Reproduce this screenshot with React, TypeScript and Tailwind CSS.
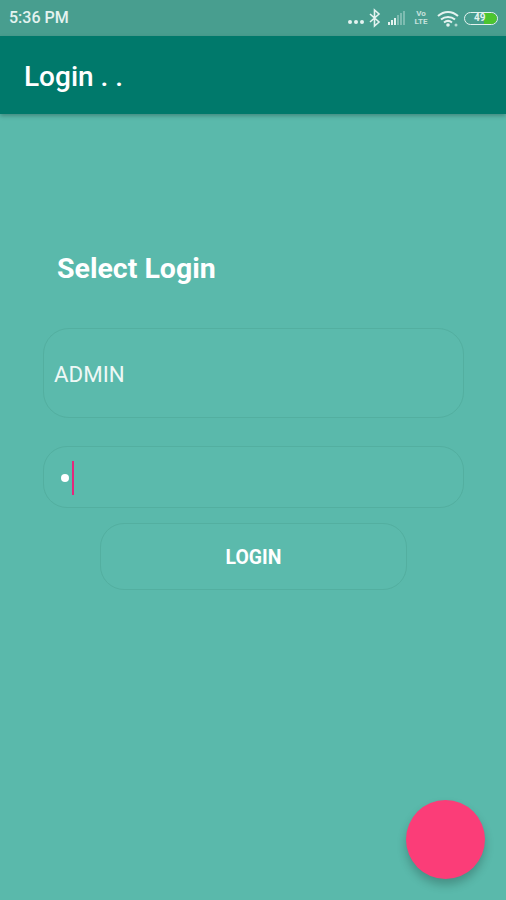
export default function App() {
  return (
    <div className="relative h-[900px] w-[506px] overflow-hidden bg-[#5ab9ab] font-['Roboto',sans-serif] text-white">
      {/* Status bar */}
      <div className="flex h-9 items-center justify-between bg-[#489e8f] pl-[9px] pr-[8px]">
        <span className="text-[16px] font-medium leading-none text-[#e4f3f0]">5:36 PM</span>
        <div className="flex items-center text-[#e4f3f0]">
          {/* dots, bluetooth, signal */}
          <svg width="62" height="20" viewBox="0 0 62 20">
            <circle cx="3" cy="14" r="2" fill="currentColor" />
            <circle cx="9" cy="14" r="2" fill="currentColor" />
            <circle cx="15" cy="14" r="2" fill="currentColor" />
            <path d="M23 6l9 8-4.500 4V2l4.500 4-9 8" fill="none" stroke="currentColor" strokeWidth="1.600" />
            <rect x="41" y="14" width="2" height="3" fill="currentColor" />
            <rect x="44" y="12" width="2" height="5" fill="currentColor" />
            <rect x="47" y="10" width="2" height="7" fill="currentColor" />
            <rect x="50" y="7" width="2" height="10" fill="currentColor" opacity="0.35" />
            <rect x="53" y="5" width="2" height="12" fill="currentColor" opacity="0.35" />
            <rect x="56" y="3" width="2" height="14" fill="currentColor" opacity="0.35" />
          </svg>
          {/* volte */}
          <div className="ml-[3px] flex w-[18px] flex-col items-center text-[8px] font-bold leading-[8px] opacity-80">
            <span>Vo</span>
            <span>LTE</span>
          </div>
          {/* wifi */}
          <svg width="22" height="20" viewBox="0 0 22 20" className="ml-[7px]">
            <path d="M1 8c6-5.500 14-5.500 20 0M4 11.500c4-3.500 10-3.500 14 0M7 14.500c2.500-2 5.500-2 8 0" fill="none" stroke="currentColor" strokeWidth="2" />
            <circle cx="11" cy="17" r="1.800" fill="currentColor" />
            <circle cx="19" cy="17" r="1.500" fill="currentColor" opacity="0.7" />
          </svg>
          {/* battery */}
          <div className="relative ml-[5px] flex h-[13px] w-[34px] items-center overflow-hidden rounded-full border-[1.5px] border-[#e4f3f0] pl-[9px]">
            <span className="absolute bottom-0 right-0 top-0 w-[13px] rounded-r-full bg-[#4cc52f]" />
            <span className="relative text-[10px] font-bold leading-none text-[#e4f3f0]">49</span>
          </div>
        </div>
      </div>

      {/* App bar */}
      <div className="flex h-[78px] items-center bg-[#00796b] pl-6 pt-[3px] shadow-[0_2px_4px_rgba(0,0,0,0.25)]">
        <span className="text-[28px] font-medium leading-none">Login . .</span>
      </div>

      {/* Form */}
      <div className="flex flex-col pl-[43px] pt-[139px]">
        <h1 className="ml-[14px] text-[28.5px] font-bold leading-8">Select Login</h1>

        <div className="mt-[43px] flex h-[90px] w-[421px] items-center rounded-[26px] border border-[#53afa0] bg-[#5bbaac] pl-[10px] pt-[3px]">
          <span className="text-[22.3px] leading-none text-[#eef8f6]">ADMIN</span>
        </div>

        <div className="mt-7 flex h-[62px] w-[421px] items-center rounded-[24px] border border-[#53afa0] bg-[#5bbaac] pl-[18px] pt-[1px]">
          <span className="h-2 w-2 -translate-x-px rounded-full bg-white" />
          <span className="ml-[2px] h-[34px] w-[2px] bg-[#e5277b]" />
        </div>

        <button className="ml-[57px] mt-[15px] flex h-[67px] w-[307px] items-center justify-center rounded-[24px] border border-[#53afa0] bg-[#5bbaac] pt-[2px] text-[19.400px] font-bold">
          LOGIN
        </button>
      </div>

      {/* FAB */}
      <div className="absolute left-[406px] top-[800px] h-[79px] w-[79px] rounded-full bg-[#fb3d78] shadow-[0_6px_10px_rgba(0,0,0,0.22)]" />
    </div>
  )
}
